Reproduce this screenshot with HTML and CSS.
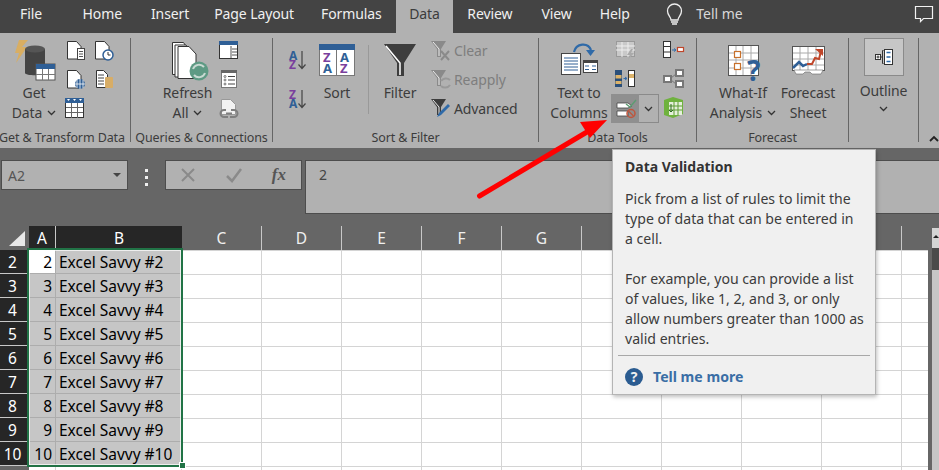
FILE: index.html
```html
<!DOCTYPE html>
<html lang="en">
<head>
<meta charset="utf-8">
<title>Excel Data Validation</title>
<link rel="stylesheet" href="styles.css">
</head>
<body>
<div class="app">
  <nav class="tabs">
    <span class="tab tab-file">File</span>
    <span class="tab tab-home">Home</span>
    <span class="tab tab-insert">Insert</span>
    <span class="tab">Page Layout</span>
    <span class="tab">Formulas</span>
    <span class="tab tab-active">Data</span>
    <span class="tab tab-review">Review</span>
    <span class="tab tab-view">View</span>
    <span class="tab">Help</span>
    <span class="tell">
      <svg width="17" height="24" viewBox="664 3 17 24"><path d="M669 21c0-3-3.500-4.500-3.500-9a7 7 0 0 1 14 0c0 4.500-3.500 6-3.500 9z" fill="none" stroke="#eee" stroke-width="1.300"/><path d="M669 23h7M670 25h5" stroke="#eee" stroke-width="1.300"/></svg>
      <span>Tell me</span>
    </span>
    <svg class="comment" width="20" height="18" viewBox="914 5 20 18"><path d="M915.500 6.500h17v12h-9l-3 3v-3h-5z" fill="none" stroke="#f2f2f2" stroke-width="1.200"/></svg>
  </nav>

  <section class="ribbon">
    <div class="group g1">
      <div class="body">
        <div class="big w62">
          <svg width="62" height="45" viewBox="3 38 62 45">
            <path d="M28 40h-9l-4 13h4l-3 10 11-16h-5z" fill="#d9ae62"/>
            <path d="M25 49v24c0 3 20 3 20 0V49z" fill="#444"/>
            <ellipse cx="35" cy="49" rx="10" ry="3.500" fill="#555"/>
            <rect x="36" y="64" width="19" height="16" fill="#fff" stroke="#555"/>
            <rect x="36" y="64" width="19" height="5" fill="#2f5f96"/>
            <path d="M42.500 69v11M48.500 69v11M36 74.500h19" stroke="#777"/>
          </svg>
          <span>Get</span>
          <span>Data <svg class="chev" width="9" height="6" viewBox="0 0 9 6"><path d="M1 1l3.500 3.500L8 1" /></svg></span>
        </div>
        <div class="small-grid cols2">
          <svg width="28" height="28" viewBox="65 38 28 28"><path d="M67.500 41.500h9l4.500 5v12.500h-13.500z" fill="#fff" stroke="#333"/><rect x="77.500" y="48.500" width="7" height="11" fill="#fff" stroke="#444"/><path d="M79 51.500h4M79 54h4M79 56.500h4" stroke="#555"/></svg>
          <svg width="28" height="28" viewBox="93 38 28 28"><path d="M95.500 41.500h9l4.500 5v12.500h-13.500z" fill="#fff" stroke="#333"/><circle cx="108" cy="55" r="5" fill="#fff" stroke="#2f5f96" stroke-width="1.500"/><path d="M108 52v3h2.500" fill="none" stroke="#333"/></svg>
          <svg width="28" height="28" viewBox="65 66 28 28"><path d="M67.500 70.500h9l4.500 5v12.500h-13.500z" fill="#fff" stroke="#333"/><circle cx="80" cy="84" r="5" fill="#2f5f96"/><path d="M75 84h10M80 79v10M77 80v8M83 80v8" stroke="#fff" stroke-width=".8"/></svg>
          <svg width="28" height="28" viewBox="93 66 28 28"><path d="M96.500 70.500h7l4 4v13h-11z" fill="#fff" stroke="#333"/><path d="M98 75h6M98 78h6M98 81h6M98 84h6" stroke="#444"/><rect x="105" y="77" width="8" height="11" rx="1" fill="#d8ad66"/></svg>
          <svg width="28" height="28" viewBox="65 94 28 28"><rect x="65.500" y="98.500" width="18" height="19" fill="#fff" stroke="#333"/><rect x="65" y="98" width="19" height="5" fill="#2f5f96"/><path d="M67 99h3l-1.500 2zM73 99h3l-1.500 2zM79 99h3l-1.500 2z" fill="#fff"/><path d="M71.500 103v15M77.500 103v15M66 107.500h17M66 112.500h17" stroke="#666"/></svg>
        </div>
      </div>
      <div class="label">Get &amp; Transform Data</div>
    </div>

    <div class="group g2">
      <div class="body">
        <div class="big w53">
          <svg width="53" height="45" viewBox="161 38 53 45">
            <path d="M172.500 42.500h11l2 3v29h-13z" fill="#fff" stroke="#333"/>
            <path d="M175 45h11l2 3v29h-13z" fill="#fff" stroke="#333"/>
            <path d="M178 46.500h11l7 7.500v24.500h-18z" fill="#fff" stroke="#333"/>
            <circle cx="199" cy="71" r="9.500" fill="#5e9a84"/>
            <path d="M193 69a6.500 6.500 0 0 1 11-2M205 73a6.500 6.500 0 0 1-11 2" fill="none" stroke="#c9d9d2" stroke-width="2"/>
          </svg>
          <span>Refresh</span>
          <span>All <svg class="chev" width="9" height="6" viewBox="0 0 9 6"><path d="M1 1l3.500 3.500L8 1"/></svg></span>
        </div>
        <div class="small-grid cols1w">
          <svg width="30" height="28" viewBox="214 38 30 28"><rect x="219.500" y="41.500" width="18" height="17" fill="#fff" stroke="#333"/><rect x="219" y="41" width="19" height="4" fill="#2f5f96"/><path d="M231 46v12M232 49h5M232 52h5M232 55h5" stroke="#555"/></svg>
          <svg width="30" height="28" viewBox="214 66 30 28"><rect x="221.500" y="70.500" width="15" height="17" fill="#fff" stroke="#777"/><rect x="221" y="70" width="16" height="3" fill="#666"/><path d="M228 76.500h7M228 80h7M228 84h7" stroke="#444"/><circle cx="225" cy="76.500" r="1" fill="none" stroke="#444" stroke-width=".7"/><circle cx="225" cy="80" r="1" fill="none" stroke="#444" stroke-width=".7"/><circle cx="225" cy="84" r="1" fill="none" stroke="#444" stroke-width=".7"/></svg>
          <svg width="30" height="28" viewBox="214 94 30 28"><path d="M221.500 99.500h9l5 5v10h-14z" fill="#f2f2f2" stroke="#999"/><path d="M226 110h-2a3.500 3.500 0 0 0 0 7h4M231 110h3a3.500 3.500 0 0 1 0 7h-4M226 113.500h6" fill="none" stroke="#7f7f7f" stroke-width="2"/></svg>
        </div>
      </div>
      <div class="label">Queries &amp; Connections</div>
    </div>

    <div class="group g3">
      <div class="body">
        <div class="sort-col">
          <svg width="28" height="38" viewBox="284 41 28 38"><text x="289" y="60" class="az az-b">A</text><text x="289" y="69" class="az az-p">Z</text><path d="M302 51v17M298.500 64.500l3.500 4 3.500-4" fill="none" stroke="#444" stroke-width="1.200"/></svg>
          <svg width="28" height="38" viewBox="284 79 28 38"><text x="289" y="99" class="az az-p">Z</text><text x="289" y="108" class="az az-b">A</text><path d="M302 90v17M298.500 103.500l3.500 4 3.500-4" fill="none" stroke="#444" stroke-width="1.200"/></svg>
        </div>
        <div class="big w50">
          <svg width="50" height="45" viewBox="312 38 50 45">
            <rect x="319.500" y="44.500" width="35" height="31" fill="#fff" stroke="#777"/>
            <rect x="319" y="44" width="36" height="6" fill="#2f5f96"/>
            <path d="M336.500 50v25" stroke="#777"/>
            <text x="323" y="62" class="az2 az-p">Z</text><text x="323" y="73" class="az2 az-b">A</text>
            <text x="340" y="62" class="az2 az-b">A</text><text x="340" y="73" class="az2 az-p">Z</text>
          </svg>
          <span>Sort</span>
        </div>
        <div class="vsep"></div>
        <div class="big w62">
          <svg width="62" height="45" viewBox="369 38 62 45">
            <path d="M384 44h32l-12 19v13h-7V63z" fill="#3d3d3d"/>
            <path d="M386 46l14 17v12" fill="none" stroke="#fff" stroke-width="1.500"/>
          </svg>
          <span>Filter</span>
        </div>
        <div class="list">
          <div class="row row-off">
            <svg width="23" height="28" viewBox="431 36 23 28"><path d="M431 41h15l-5 8v8h-4v-8z" fill="#8a8a8a"/><path d="M433 42l6 7v7" fill="none" stroke="#eee"/><path d="M441 51l8 9M449 51l-8 9" stroke="#8a8a8a" stroke-width="2"/></svg>
            <span>Clear</span>
          </div>
          <div class="row row-off">
            <svg width="23" height="28" viewBox="431 65 23 28"><path d="M431 70h15l-5 8v8h-4v-8z" fill="#8a8a8a"/><path d="M433 71l6 7v7" fill="none" stroke="#eee"/><path d="M441 81a6 6 0 0 1 9-1M450 85a6 6 0 0 1-9 1" fill="none" stroke="#999" stroke-width="2"/></svg>
            <span>Reapply</span>
          </div>
          <div class="row">
            <svg width="23" height="28" viewBox="431 94 23 28"><path d="M431 99h15l-5 8v8h-4v-8z" fill="#3d3d3d"/><path d="M433 100l6 7v7" fill="none" stroke="#eee"/><path d="M437 117l2 -4 9-9 2 2-9 9z" fill="#2f6aa8"/></svg>
            <span>Advanced</span>
          </div>
        </div>
      </div>
      <div class="label">Sort &amp; Filter</div>
    </div>

    <div class="group g4">
      <div class="body">
        <div class="big w64">
          <svg width="64" height="45" viewBox="547 38 64 45">
            <rect x="561.500" y="53.500" width="19" height="21" fill="#fff" stroke="#444"/>
            <path d="M564 58h14M564 61h14M564 64h14M564 67h14M564 70h14" stroke="#2f5f96"/>
            <rect x="583.500" y="60.500" width="14" height="12" fill="#fff" stroke="#444"/>
            <rect x="583" y="60" width="15" height="3" fill="#444"/>
            <path d="M585 66h4M592 66h4M585 69.500h4M592 69.500h4" stroke="#2f5f96" stroke-width="1.200"/>
            <path d="M574 52c2-9 14-10 17-2" fill="none" stroke="#2f6aa8" stroke-width="2.200"/>
            <path d="M586 50h9l-4.500 6z" fill="#2f6aa8"/>
          </svg>
          <span>Text to</span>
          <span>Columns</span>
        </div>
        <div class="small-grid tools">
          <svg width="48" height="28" viewBox="611 38 48 28"><rect x="616.500" y="41.500" width="18" height="15" fill="#c9c9c9" stroke="#999"/><path d="M616 46h19M616 50h19M622 42v15M628 42v15" stroke="#eee"/><path d="M631 49l-4 6h3l-2 5 6-7h-3l2-4z" fill="#aaa"/></svg>
          <svg width="28" height="28" viewBox="659 38 28 28"><rect x="663.500" y="41.500" width="7" height="16" fill="#fff" stroke="#333"/><path d="M663 46.500h8M663 52h8" stroke="#333"/><path d="M672 50h3M674 48.500l2 1.500-2 1.500" fill="none" stroke="#2f6aa8"/><rect x="677.500" y="47.500" width="6" height="4" fill="#fff" stroke="#c0462a" stroke-width="1.200"/></svg>
          <svg width="48" height="28" viewBox="611 66 48 28"><rect x="615" y="70" width="7" height="17" fill="#2a4f7a"/><rect x="615.500" y="75" width="6" height="3.500" fill="#dcb36a"/><rect x="615.500" y="81" width="6" height="3" fill="#dcb36a"/><rect x="628.500" y="70.500" width="6" height="16" fill="#fff" stroke="#333"/><rect x="629" y="74" width="5" height="4" fill="#dcb36a"/><path d="M623.500 78.500h3M625 77l2 1.500-2 1.500" fill="none" stroke="#2f6aa8"/></svg>
          <svg width="28" height="28" viewBox="659 66 28 28"><rect x="664" y="76" width="7" height="6" fill="#fff" stroke="#777" stroke-width="2"/><rect x="676" y="70" width="7" height="6" fill="#fff" stroke="#777" stroke-width="2"/><rect x="676" y="81" width="7" height="6" fill="#fff" stroke="#777" stroke-width="2"/><path d="M671 78l5-4M671 80l5 4" stroke="#777"/></svg>
          <div class="split">
            <div class="split-main">
              <svg width="23" height="20" viewBox="614 99 23 20"><path d="M617 103h11l4 3-4 2h-11z" fill="#fff" stroke="#444" stroke-width=".8"/><path d="M617 111h11v5h-11z" fill="#fff" stroke="#444" stroke-width=".8"/><path d="M626 104l4 3 6-7" fill="none" stroke="#5d9c72" stroke-width="1.500"/><circle cx="631" cy="113.500" r="4" fill="none" stroke="#c0553c" stroke-width="1.500"/><path d="M628.500 111l5 5" stroke="#c0553c" stroke-width="1.200"/></svg>
            </div>
            <div class="split-drop"><svg class="chev chev-drop" width="9" height="6" viewBox="0 0 9 6"><path d="M1 1l3.500 3.500L8 1"/></svg></div>
          </div>
          <svg width="28" height="28" viewBox="659 94 28 28"><path d="M664 100l9-3 10 3v14l-10 4-9-3z" fill="#6fb23e"/><path d="M669 102h13v13h-13z" fill="#e5f0da"/><path d="M674 102v13M678 102v13M669 106h13M669 110h13" stroke="#5d9c35"/><path d="M671 104v8l-2-2M671 112l2-2" fill="none" stroke="#2d6a20"/></svg>
        </div>
      </div>
      <div class="label">Data Tools</div>
    </div>

    <div class="group g5">
      <div class="body">
        <div class="big w74">
          <svg width="74" height="45" viewBox="706 38 74 45">
            <rect x="728.500" y="45.500" width="30" height="30" fill="#fff" stroke="#555"/>
            <path d="M736 46v29M743 46v29M751 46v29M729 53h29M729 60h29M729 68h29" stroke="#aaa"/>
            <rect x="734.500" y="51.500" width="6" height="6" fill="#fff" stroke="#c8702a" stroke-width="1.200"/>
            <rect x="734.500" y="63.500" width="6" height="6" fill="#fff" stroke="#c8702a" stroke-width="1.200"/>
            <text x="747" y="80.500" class="qm">?</text>
          </svg>
          <span>What-If</span>
          <span>Analysis <svg class="chev" width="9" height="6" viewBox="0 0 9 6"><path d="M1 1l3.500 3.500L8 1"/></svg></span>
        </div>
        <div class="big w56">
          <svg width="56" height="45" viewBox="780 38 56 45">
            <rect x="792.500" y="46.500" width="32" height="24" fill="#fff" stroke="#555"/>
            <path d="M800 47v23M808 47v23M816 47v23M793 53h31M793 59h31M793 65h31" stroke="#aaa"/>
            <path d="M794 70h29l-2 4h-9l-2-2h-5l-2 2h-7z" fill="#fff" stroke="#666" stroke-width=".6"/>
            <path d="M793 68l6-6 4 4 4-2" fill="none" stroke="#2f5f96" stroke-width="2.500"/>
            <path d="M807 64l5 0 3-6 4 1 2-8" fill="none" stroke="#c0462a" stroke-width="2"/>
            <path d="M815 49h8v7z" fill="#c0462a"/>
          </svg>
          <span>Forecast</span>
          <span>Sheet</span>
        </div>
      </div>
      <div class="label">Forecast</div>
    </div>

    <div class="group g6">
      <div class="outline-btn">
        <svg width="20" height="18" viewBox="0 0 20 18"><rect x="1.500" y="6.500" width="5" height="5" fill="#fff" stroke="#333"/><path d="M2.500 9h3M4 7.500v3" stroke="#333"/><path d="M7 9h2M9.500 2.500h-1v13h1" fill="none" stroke="#333"/><rect x="10.500" y="1.500" width="8" height="15" fill="#fff" stroke="#333"/><path d="M12.500 4.500h4M12.500 9h4M12.500 13.500h4" stroke="#2f6aa8" stroke-width="1.500"/></svg>
      </div>
      <span class="outline-text">Outline</span>
      <svg class="chev" width="9" height="6" viewBox="0 0 9 6"><path d="M1 1l3.500 3.500L8 1"/></svg>
    </div>
    <svg class="collapse" width="10" height="6" viewBox="0 0 10 6"><path d="M1 5l4-4 4 4"/></svg>
  </section>

  <section class="fbar">
    <div class="namebox"><span>A2</span><i class="caret"></i></div>
    <div class="dots"><i></i><i></i><i></i></div>
    <div class="fxbox">
      <svg width="16" height="16" viewBox="0 0 16 16"><path d="M2 2l12 12M14 2L2 14" stroke="#8a8a8a" stroke-width="2"/></svg>
      <svg width="18" height="16" viewBox="0 0 18 16"><path d="M2 9l5 5L16 2" fill="none" stroke="#8a8a8a" stroke-width="2.500"/></svg>
      <span class="fx">fx</span>
    </div>
    <div class="finput">2</div>
  </section>

  <section class="sheet">
    <div class="sheet-grid">
      <div class="corner"><i></i></div>
      <div class="ch ch-sel">A</div>
      <div class="ch ch-sel">B</div>
      <div class="col-heads">
        <span class="ch">C</span><span class="ch">D</span><span class="ch">E</span><span class="ch">F</span><span class="ch">G</span><span class="ch">H</span><span class="ch">I</span><span class="ch">J</span><span class="ch">K</span><span class="ch ch-end"></span>
      </div>
      <div class="rh">2</div><div class="num active">2</div><div class="txt">Excel Savvy #2</div><div class="blank"></div>
      <div class="rh">3</div><div class="num">3</div><div class="txt">Excel Savvy #3</div>
      <div class="rh">4</div><div class="num">4</div><div class="txt">Excel Savvy #4</div>
      <div class="rh">5</div><div class="num">5</div><div class="txt">Excel Savvy #5</div>
      <div class="rh">6</div><div class="num">6</div><div class="txt">Excel Savvy #6</div>
      <div class="rh">7</div><div class="num">7</div><div class="txt">Excel Savvy #7</div>
      <div class="rh">8</div><div class="num">8</div><div class="txt">Excel Savvy #8</div>
      <div class="rh">9</div><div class="num">9</div><div class="txt">Excel Savvy #9</div>
      <div class="rh">10</div><div class="num">10</div><div class="txt">Excel Savvy #10</div>
      <div class="rh rh-stub"></div><div class="stub"></div><div class="stub"></div>
      <div class="selection"><i class="handle"></i></div>
    </div>
    <div class="scrollbar">
      <div class="sb-up"><i></i></div>
      <div class="sb-thumb"></div>
    </div>
  </section>

  <svg class="arrow" width="150" height="95" viewBox="470 115 150 95">
    <path d="M479.500 196L592 129" stroke="#f00" stroke-width="5" stroke-linecap="round"/>
    <path d="M607 120l-27 2 10 16z" fill="#f00"/>
  </svg>

  <aside class="tip">
    <h2>Data Validation</h2>
    <p>Pick from a list of rules to limit the<br>type of data that can be entered in<br>a cell.</p>
    <p>For example, you can provide a list<br>of values, like 1, 2, and 3, or only<br>allow numbers greater than 1000 as<br>valid entries.</p>
    <div class="tip-foot">
      <span class="q">?</span>
      <span>Tell me more</span>
    </div>
  </aside>
</div>
</body>
</html>
```
FILE: styles.css
```css
* { box-sizing: border-box; }
html, body { margin: 0; padding: 0; background: #666; }
.app {
  position: relative;
  width: 939px;
  height: 470px;
  overflow: hidden;
  font-family: "Noto Sans", "Open Sans", sans-serif;
  font-size: 14px;
  color: #3c3c3c;
}
svg { display: block; flex: none; overflow: visible; }

/* tabs */
.tabs {
  display: flex;
  align-items: stretch;
  height: 33px;
  background: #444;
  color: #f0f0f0;
  padding-left: 7px;
  line-height: 28px;
}
.tab { padding: 0 13.5px; white-space: nowrap; letter-spacing: -.1px; }
.tab-file { padding: 0 27px 0 13px; }
.tab-home { padding-right: 15.5px; }
.tab-insert { padding-right: 11.5px; }
.tab-active { background: #b1b1b1; color: #3c3c3c; padding: 0 13.5px; margin: 0 0.5px; }
.tab-review { padding-right: 15.5px; }
.tab-view { padding-right: 14.5px; }
.tell { display: flex; align-items: center; gap: 13px; margin-left: 23px; height: 28px; color: #d8d8d8; }
.comment { margin: 5px 5px 0 auto; }

/* ribbon */
.ribbon {
  display: flex;
  height: 115px;
  padding-top: 5px;
  background: #b1b1b1;
}
.group {
  display: flex;
  flex-direction: column;
  height: 104px;
  border-right: 1px solid #666;
  flex: none;
}
.g1 { width: 131px; }
.g2 { width: 142px; }
.g3 { width: 266px; }
.g4 { width: 158px; }
.g5 { width: 152px; }
.g6 { width: 70px; align-items: center; }
.body { display: flex; height: 86px; flex: none; }
.label {
  height: 18px;
  line-height: 18px;
  margin-top: 5px;
  text-align: center;
  font-size: 12.5px;
  white-space: nowrap;
  letter-spacing: -.1px;
}
.g1 .body { padding-left: 3px; }
.g1 .label { text-align: left; margin-left: -1px; }
.big {
  display: flex;
  flex-direction: column;
  align-items: center;
  flex: none;
  line-height: 20px;
  white-space: nowrap;
  letter-spacing: -.1px;
}
.big > span { display: flex; align-items: center; gap: 5px; }
.w50 { width: 50px; }
.w53 { width: 53px; }
.w56 { width: 56px; }
.w62 { width: 62px; }
.w64 { width: 64px; }
.w74 { width: 74px; }
.chev path { fill: none; stroke: #333; stroke-width: 1.300; }
.small-grid { display: grid; flex: none; }
.cols2 { grid-template-columns: 28px 28px; grid-auto-rows: 28px; }
.cols1w { grid-template-columns: 30px; grid-auto-rows: 28px; }
.g2 .body { padding-left: 30px; }
.g3 .body { padding-left: 11px; }
.g4 .body { padding-left: 8px; }
.g5 .body { padding-left: 9px; }
.sort-col { display: flex; flex-direction: column; padding-top: 3px; }
.az { font: 700 12px "Noto Sans", sans-serif; }
.az2 { font: 700 13px "Noto Sans", sans-serif; }
.az-b { fill: #2f5f96; }
.az-p { fill: #7a3f9d; }
.qm { font: 700 28px "Noto Sans", sans-serif; fill: #2f5f96; }
.vsep { width: 1px; height: 69px; margin: 7px 0 0 6px; background: #999; flex: none; }
.list { display: flex; flex-direction: column; gap: 1px; margin-top: -2px; }
.row { display: flex; align-items: center; height: 28px; letter-spacing: -.1px; }
.row-off { color: #7e7e7e; }
.tools { grid-template-columns: 48px 28px; grid-template-rows: 28px 28px 29px; }
.split { display: flex; height: 29px; }
.split-main { width: 28px; background: #8f8f8f; display: flex; align-items: center; justify-content: center; }
.split-drop { width: 20px; border: 1px solid #8a8a8a; border-left: 0; display: flex; align-items: center; justify-content: center; }
.outline-btn {
  width: 40px;
  height: 38px;
  background: #c6c6c6;
  border: 1px solid #8a8a8a;
  display: flex;
  align-items: center;
  justify-content: center;
}
.outline-text { line-height: 20px; margin: 5px 0 5px; letter-spacing: -.1px; }
.collapse { margin: 98px 0 0 10px; }
.collapse path { fill: none; stroke: #222; stroke-width: 1.800; }

/* formula bar */
.fbar {
  display: flex;
  align-items: flex-start;
  height: 78px;
  padding: 12px 0 0 1px;
  background: #666;
}
.namebox {
  display: flex;
  align-items: center;
  justify-content: space-between;
  width: 127px;
  height: 30px;
  padding: 0 6px;
  background: #b1b1b1;
  border: 1px solid #4d4d4d;
  color: #555;
}
.caret { width: 0; height: 0; border: 4px solid transparent; border-top: 4px solid #444; border-bottom: 0; }
.dots { display: flex; flex-direction: column; gap: 4px; margin: 9px 17px 0 17px; }
.dots i { display: block; width: 3px; height: 3px; background: #f0f0f0; }
.fxbox {
  display: flex;
  align-items: center;
  width: 137px;
  height: 30px;
  padding: 0 15px 0 14px;
  justify-content: space-between;
  background: #b1b1b1;
  border: 1px solid #4d4d4d;
}
.fx { font: italic 700 17px "Liberation Serif", serif; color: #555; }
.finput {
  flex: 1;
  height: 54px;
  margin-left: 3px;
  padding: 4px 0 0 13px;
  background: #b1b1b1;
  border-top: 1px solid #4d4d4d;
  border-left: 1px solid #4d4d4d;
  border-bottom: 1px solid #4d4d4d;
  color: #444;
}

/* sheet */
.sheet { display: flex; background: #666; height: 244px; }
.sheet-grid {
  position: relative;
  display: grid;
  grid-template-columns: 29px 27px 126px 746px;
  grid-template-rows: 24px repeat(9, 24px) 4px;
  width: 928px;
  color: #000;
}
.corner { background: #666; position: relative; }
.corner i {
  display: block;
  margin: 5px 0 0 9px;
  width: 0;
  height: 0;
  border-left: 16px solid transparent;
  border-bottom: 15px solid #e8e8e8;
}
.ch {
  display: flex;
  align-items: center;
  justify-content: center;
  font-size: 15.500px;
  color: #f0f0f0;
  background: #666;
  border-right: 1px solid #c8c8c8;
}
.ch-sel { background: #262626; color: #fff; }
.ch-sel + .ch-sel { border-right: 0; }
.col-heads { display: grid; grid-template-columns: repeat(9, 80px) 26px; }
.ch-end { border-right: 0; }
.rh {
  display: flex;
  align-items: center;
  justify-content: center;
  background: #262626;
  color: #fff;
  font-size: 15.500px;
  border-bottom: 1px solid #c8c8c8;
  border-right: 1px solid #666;
  padding-right: 3px;
}
.rh-stub { background: #666; border: 0; }
.num, .txt {
  display: flex;
  align-items: center;
  background: #c6c6c6;
  border-right: 1px solid #adadad;
  border-bottom: 1px solid #adadad;
  font-size: 15.500px;
}
.num { justify-content: flex-end; padding-right: 3px; }
.txt { padding-left: 3px; white-space: nowrap; }
.active { background: #fff; }
.blank {
  grid-column: 4;
  grid-row: 2 / span 10;
  background-color: #fff;
  background-image:
    repeating-linear-gradient(to right, transparent 0 79px, #d4d4d4 79px 80px),
    repeating-linear-gradient(to bottom, transparent 0 23px, #d4d4d4 23px 24px);
  border-top: 1px solid #d4d4d4;
}
.stub { background: #fff; border-right: 1px solid #d4d4d4; }
.selection {
  position: absolute;
  left: 27px;
  top: 22px;
  width: 156px;
  height: 219px;
  border: 2px solid #217346;
  outline: 1px solid rgba(255,255,255,.7);
  outline-offset: -3px;
  pointer-events: none;
}
.handle {
  position: absolute;
  right: -5px;
  bottom: -4px;
  width: 7px;
  height: 7px;
  background: #217346;
  border: 1px solid #fff;
}
.scrollbar { margin: 2px 0 0 4px; width: 7px; background: #c6c6c6; flex: none; }
.sb-up { height: 20px; background: #d4d4d4; display: flex; justify-content: center; padding-top: 7px; }
.sb-up i { display: block; width: 0; height: 0; border: 3px solid transparent; border-bottom: 3px solid #222; border-top: 0; }
.sb-thumb { height: 22px; background: #4a4a4a; }

/* overlays */
.arrow { position: absolute; left: 470px; top: 115px; }
.tip {
  position: absolute;
  left: 612px;
  top: 149px;
  width: 264px;
  height: 246px;
  padding: 7px 5px 0 12px;
  background: #f0f0f0;
  border: 1px solid #b4b4b4;
  box-shadow: 1px 2px 4px rgba(0,0,0,.25);
  color: #3c3c3c;
  font-size: 14.100px;
  line-height: 20px;
}
.tip h2 { margin: 0 0 12px; font-size: 14px; font-weight: 700; line-height: 20px; color: #333; }
.tip p { margin: 0 0 20px; white-space: nowrap; }
.tip p + p { margin-bottom: 0; }
.tip-foot {
  display: flex;
  align-items: center;
  gap: 10px;
  margin: 6px 0 0 -7px;
  padding: 7px 0 0 7px;
  height: 36px;
  border-top: 1px solid #a8a8a8;
  font-weight: 700;
  color: #3a6ea5;
}
.q {
  display: flex;
  align-items: center;
  justify-content: center;
  width: 18px;
  height: 18px;
  border-radius: 50%;
  background: #2b5c91;
  color: #f0f0f0;
  font-size: 14px;
  font-weight: 700;
  letter-spacing: 0;
}
```
